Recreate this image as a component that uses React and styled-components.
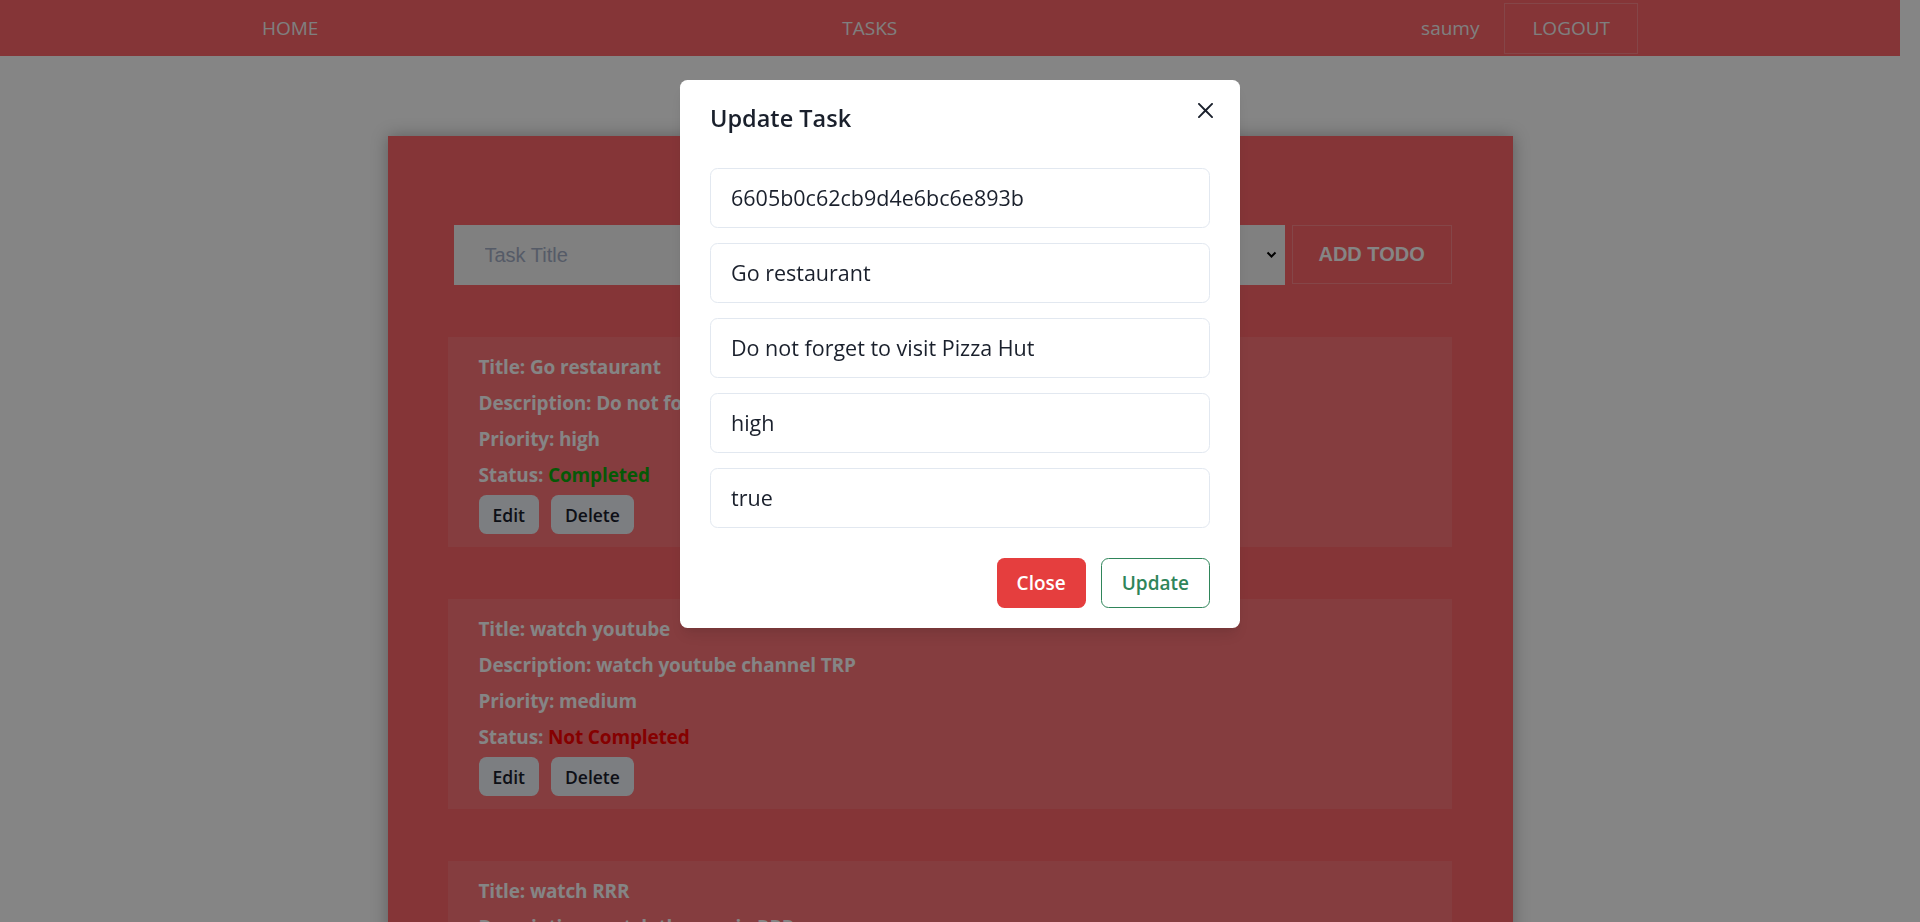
import React from "react";
import styled, { createGlobalStyle } from "styled-components";

const GlobalStyle = createGlobalStyle`
  html, body {
    margin: 0;
    padding: 0;
    background: #ffffff;
    overflow: hidden;
    height: 100%;
  }
  body {
    font-family: "Open Sans", "Noto Sans", sans-serif;
  }
  * { box-sizing: border-box; }
`;

const Page = styled.div`
  margin-right: 20px;
  min-height: 100vh;
`;

const NavBar = styled.nav`
  height: 56px;
  background: #ff666a;
  display: flex;
  align-items: center;
  justify-content: space-around;
`;

const NavLink = styled.a`
  font-size: 19px;
  color: #f4f4f4;
  text-decoration: none;
  line-height: 1;
`;

const UserGroup = styled.div`
  display: flex;
  align-items: center;
  gap: 25px;
`;

const UserName = styled.span`
  font-size: 19px;
  color: #f4f4f4;
`;

const OutlineNavButton = styled.button`
  height: 51px;
  padding: 0 27px;
  background: transparent;
  border: 1px solid rgba(255, 255, 255, 0.22);
  color: #f4f4f4;
  font-family: "Open Sans", sans-serif;
  font-size: 19px;
`;

const Main = styled.main`
  display: flex;
  justify-content: center;
  padding-top: 80px;
`;

const Card = styled.section`
  width: 1125px;
  background: #ff666a;
  padding: 89px 61px 40px 60px;
  box-shadow: 0 0 16px rgba(0, 0, 0, 0.3);
`;

const AddForm = styled.form`
  display: flex;
  gap: 7px;
  margin: 0 0 52px 6px;
  height: 60px;
`;

const TextField = styled.input`
  width: ${(p) => p.$w}px;
  height: 60px;
  border: none;
  outline: none;
  background: #f5f5f5;
  padding: 0 31px;
  font-family: "Liberation Sans", Arial, sans-serif;
  font-size: 20px;
  color: #222;
  &::placeholder { color: #a4aec6; }
`;

const SelectWrap = styled.div`
  position: relative;
  width: 158px;
  height: 60px;
`;

const Select = styled.select`
  appearance: none;
  width: 100%;
  height: 100%;
  border: none;
  outline: none;
  background: #f5f5f5;
  padding: 0 31px;
  font-family: "Liberation Sans", Arial, sans-serif;
  font-size: 20px;
  color: #222;
`;

const Chevron = styled.svg`
  position: absolute;
  right: 8px;
  top: 26px;
  width: 11px;
  height: 8px;
  pointer-events: none;
`;

const AddButton = styled.button`
  width: 160px;
  height: 59px;
  background: transparent;
  border: 1px solid rgba(255, 255, 255, 0.22);
  color: #ffffff;
  font-family: "Liberation Sans", Arial, sans-serif;
  font-weight: 700;
  font-size: 20px;
`;

const TaskList = styled.div`
  display: flex;
  flex-direction: column;
  gap: 52px;
`;

const TaskItem = styled.article`
  background: rgba(255, 255, 255, 0.1);
  padding: 12px 31px 13px;
`;

const TaskLine = styled.div`
  font-size: 19px;
  font-weight: 700;
  letter-spacing: -0.15px;
  line-height: 36px;
  color: #ffffff;
  white-space: nowrap;
`;

const StatusText = styled.span`
  color: ${(p) => (p.$done ? "#0caa0c" : "#ff0000")};
`;

const ItemActions = styled.div`
  display: flex;
  gap: 12px;
  margin-top: 2px;
`;

const SmallButton = styled.button`
  height: 39px;
  padding: 0 14px;
  border: none;
  border-radius: 7.5px;
  background: #edf2f7;
  color: #1a202c;
  font-family: "Open Sans", sans-serif;
  font-weight: 600;
  font-size: 17.5px;
`;

const Overlay = styled.div`
  position: fixed;
  inset: 0;
  background: rgba(0, 0, 0, 0.48);
`;

const ModalLayer = styled.div`
  position: fixed;
  inset: 0;
  display: flex;
  justify-content: center;
  align-items: flex-start;
  padding-top: 80px;
`;

const Dialog = styled.section`
  position: relative;
  width: 560px;
  background: #ffffff;
  border-radius: 7.5px;
  box-shadow: 0 10px 15px -3px rgba(0, 0, 0, 0.1), 0 4px 6px -2px rgba(0, 0, 0, 0.05);
  color: #1a202c;
`;

const DialogHeader = styled.header`
  padding: 20px 30px;
  font-size: 23.5px;
  font-weight: 600;
  line-height: 37.5px;
  color: #1a202c;
`;

const CloseX = styled.button`
  position: absolute;
  top: 10px;
  right: 15px;
  width: 40px;
  height: 40px;
  border: none;
  background: transparent;
  display: flex;
  align-items: center;
  justify-content: center;
  padding: 0;
  color: #1a202c;
`;

const DialogBody = styled.div`
  padding: 10px 30px;
  display: flex;
  flex-direction: column;
  gap: 15px;
`;

const ModalInput = styled.input`
  width: 100%;
  height: 60px;
  border: 1px solid #e2e8f0;
  border-radius: 7.5px;
  padding: 0 20px;
  font-family: "Open Sans", sans-serif;
  font-size: 21.5px;
  color: #1a202c;
  background: #ffffff;
  outline: none;
`;

const DialogFooter = styled.footer`
  display: flex;
  justify-content: flex-end;
  gap: 15px;
  padding: 20px 30px;
`;

const FooterButton = styled.button`
  height: 50px;
  padding: 0 20px;
  border-radius: 7.5px;
  font-family: "Open Sans", sans-serif;
  font-weight: 600;
  font-size: 19px;
  background: ${(p) => (p.$variant === "solid" ? "#e53e3e" : "#ffffff")};
  color: ${(p) => (p.$variant === "solid" ? "#ffffff" : "#2f855a")};
  border: ${(p) => (p.$variant === "solid" ? "none" : "1px solid #2f855a")};
`;

const tasks = [
  {
    title: "Go restaurant",
    description: "Do not forget to visit Pizza Hut",
    priority: "high",
    done: true,
  },
  {
    title: "watch youtube",
    description: "watch youtube channel TRP",
    priority: "medium",
    done: false,
  },
  {
    title: "watch RRR",
    description: "watch the movie RRR",
    priority: "low",
    done: false,
  },
];

const modalValues = [
  "6605b0c62cb9d4e6bc6e893b",
  "Go restaurant",
  "Do not forget to visit Pizza Hut",
  "high",
  "true",
];

export default function App() {
  return (
    <>
      <GlobalStyle />
      <Page>
        <NavBar>
          <NavLink>HOME</NavLink>
          <NavLink>TASKS</NavLink>
          <UserGroup>
            <UserName>saumy</UserName>
            <OutlineNavButton>LOGOUT</OutlineNavButton>
          </UserGroup>
        </NavBar>
        <Main>
          <Card>
            <AddForm onSubmit={(e) => e.preventDefault()}>
              <TextField $w={330} placeholder="Task Title" />
              <TextField $w={330} placeholder="Task Description" />
              <SelectWrap>
                <Select defaultValue="">
                  <option value="" disabled>Priority</option>
                  <option value="high">high</option>
                  <option value="medium">medium</option>
                  <option value="low">low</option>
                </Select>
                <Chevron viewBox="0 0 11 8">
                  <path d="M1.5 1.5 L5.5 5.5 L9.5 1.5" fill="none" stroke="#000" strokeWidth="2" />
                </Chevron>
              </SelectWrap>
              <AddButton type="submit">ADD TODO</AddButton>
            </AddForm>
            <TaskList>
              {tasks.map((t) => (
                <TaskItem key={t.title}>
                  <TaskLine>Title: {t.title}</TaskLine>
                  <TaskLine>Description: {t.description}</TaskLine>
                  <TaskLine>Priority: {t.priority}</TaskLine>
                  <TaskLine>
                    Status: <StatusText $done={t.done}>{t.done ? "Completed" : "Not Completed"}</StatusText>
                  </TaskLine>
                  <ItemActions>
                    <SmallButton>Edit</SmallButton>
                    <SmallButton>Delete</SmallButton>
                  </ItemActions>
                </TaskItem>
              ))}
            </TaskList>
          </Card>
        </Main>
      </Page>
      <Overlay />
      <ModalLayer>
        <Dialog>
          <DialogHeader>Update Task</DialogHeader>
          <CloseX aria-label="Close">
            <svg viewBox="0 0 24 24" width="15" height="15">
              <path
                fill="currentColor"
                d="M.439,21.44a1.5,1.5,0,0,0,2.122,2.121L11.823,14.3a.25.25,0,0,1,.354,0l9.262,9.263a1.5,1.5,0,1,0,2.122-2.121L14.3,12.177a.25.25,0,0,1,0-.354l9.263-9.262A1.5,1.5,0,0,0,21.439.44L12.177,9.7a.25.25,0,0,1-.354,0L2.561.44A1.5,1.5,0,0,0,.439,2.561L9.7,11.823a.25.25,0,0,1,0,.354Z"
              />
            </svg>
          </CloseX>
          <DialogBody>
            {modalValues.map((v) => (
              <ModalInput key={v} defaultValue={v} />
            ))}
          </DialogBody>
          <DialogFooter>
            <FooterButton $variant="solid">Close</FooterButton>
            <FooterButton $variant="outline">Update</FooterButton>
          </DialogFooter>
        </Dialog>
      </ModalLayer>
    </>
  );
}
